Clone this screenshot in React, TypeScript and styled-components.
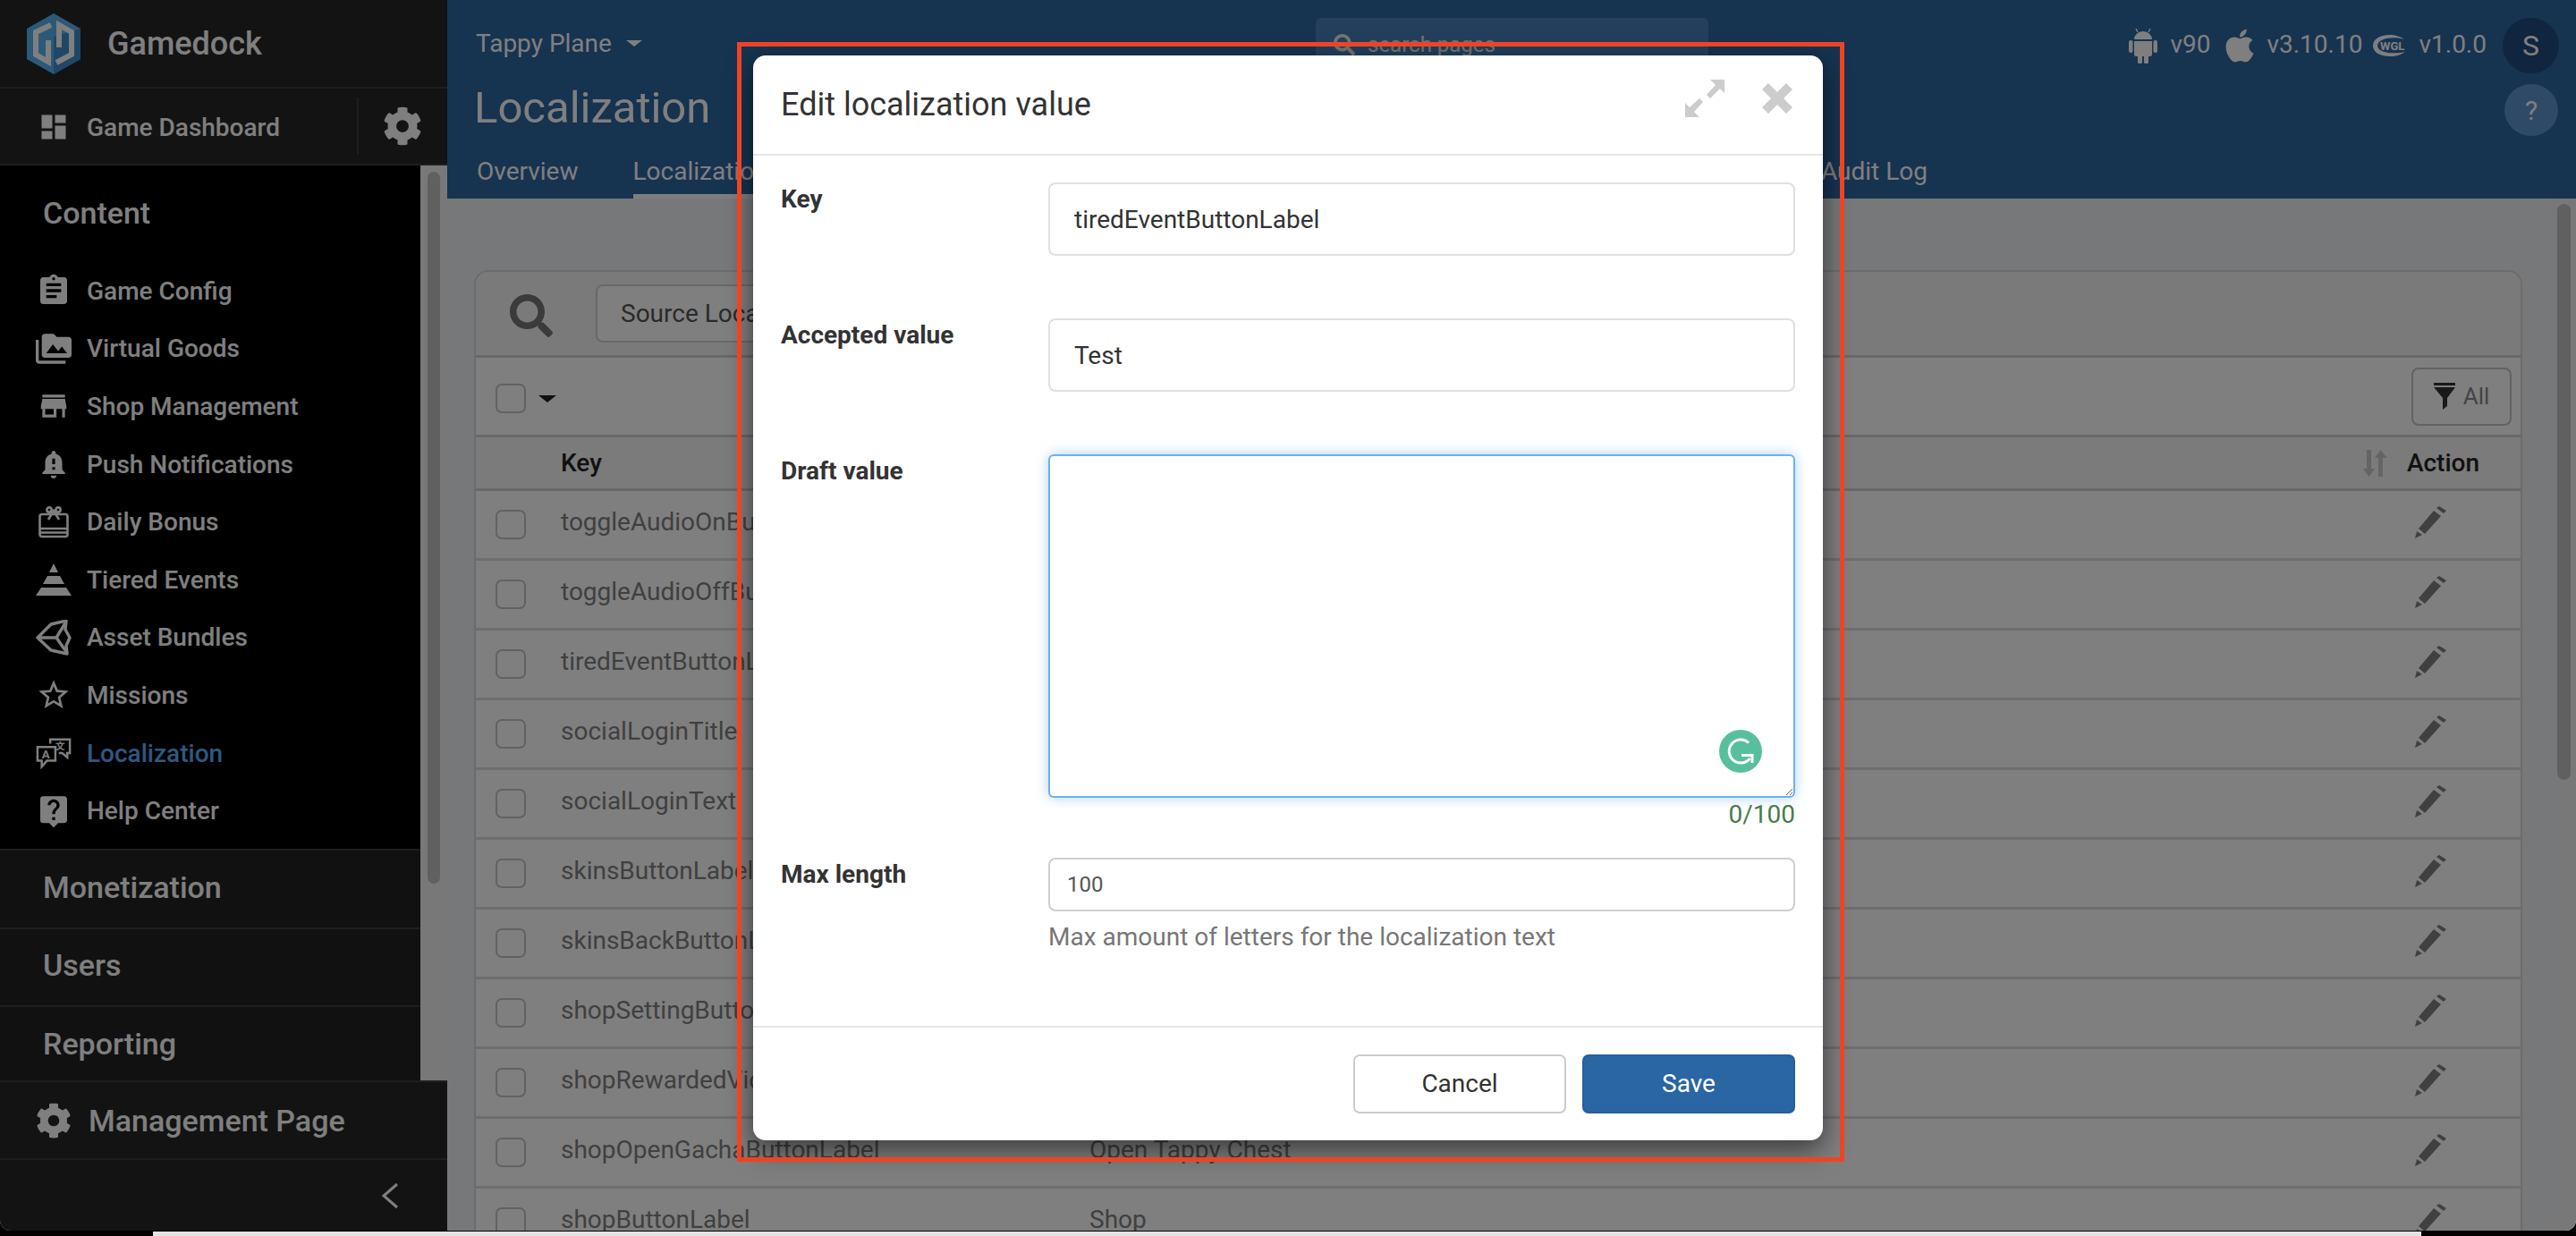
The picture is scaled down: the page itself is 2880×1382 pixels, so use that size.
import React from "react";
import styled, { createGlobalStyle } from "styled-components";
import {
  MdDashboard,
  MdAssignment,
  MdPermMedia,
  MdStore,
  MdNotificationImportant,
  MdLiveHelp,
  MdStarBorder,
} from "react-icons/md";
import { FaCog, FaSearch, FaApple } from "react-icons/fa";

const Global = createGlobalStyle`
  html, body, #root { margin: 0; padding: 0; height: 1382px; background: #000; overflow: hidden; }
  * { box-sizing: border-box; }
  body { font-family: Roboto, "Liberation Sans", sans-serif; }
`;

const Frame = styled.div`
  position: relative;
  width: 2880px;
  height: 1376px;
  display: grid;
  grid-template-columns: 500px 1fr;
  overflow: hidden;
  border-radius: 0 0 12px 12px;
  background: #eef0f3;
`;

const BottomStrip = styled.div`
  width: 2536px;
  height: 5px;
  margin: 1px 0 0 171px;
  background: #e4e4e4;
`;

/* sidebar */
const Sidebar = styled.aside`
  display: flex;
  flex-direction: column;
  height: 1376px;
  background: #262626;
  color: #fff;
`;
const Brand = styled.div`
  height: 99px;
  flex: none;
  display: flex;
  align-items: center;
  padding-left: 30px;
  gap: 30px;
  border-bottom: 2px solid #3c3c3c;
`;
const BrandName = styled.span`
  font-size: 36px;
  font-weight: 500;
`;
const DashboardRow = styled.div`
  height: 86px;
  flex: none;
  display: flex;
  align-items: center;
  border-bottom: 2px solid #3c3c3c;
`;
const DashboardLink = styled.div`
  width: 401px;
  height: 64px;
  display: flex;
  align-items: center;
  padding: 2px 0 0 42px;
  gap: 19px;
  font-size: 28px;
  font-weight: 500;
  border-right: 2px solid #3c3c3c;
`;
const DashboardGear = styled.div`
  flex: 1;
  display: flex;
  justify-content: center;
  padding-right: 2px;
`;
const ScrollArea = styled.div`
  height: 1023px;
  flex: none;
  display: flex;
`;
const NavColumn = styled.div`
  width: 470px;
  display: flex;
  flex-direction: column;
  background: #222;
`;
const ContentSection = styled.div`
  height: 764px;
  padding-top: 30px;
  background: #000;
`;
const SectionTitle = styled.div`
  font-size: 34px;
  font-weight: 500;
  padding-left: 48px;
  height: 46px;
  display: flex;
  align-items: center;
`;
const ItemList = styled.nav`
  margin-top: 32px;
  display: flex;
  flex-direction: column;
`;
const NavItem = styled.div<{ $active?: boolean }>`
  height: 64.6px;
  display: flex;
  align-items: center;
  font-size: 28px;
  font-weight: 500;
  color: ${(p) => (p.$active ? "#5cb0ff" : "#fff")};
`;
const NavIcon = styled.span`
  width: 97px;
  padding: 0 17px 0 40px;
  display: flex;
  flex: none;
  align-items: center;
  justify-content: center;
  color: #fff;
`;
const CollapsedSection = styled.div<{ $h: number; $lift: number }>`
  height: ${(p) => p.$h}px;
  border-top: 2px solid #3c3c3c;
  padding-bottom: ${(p) => p.$lift}px;
  display: flex;
  align-items: center;
`;
const ScrollTrack = styled.div<{ $w: number; $pad: number; $top: number }>`
  width: ${(p) => p.$w}px;
  flex: none;
  background: #f1f1f1;
  padding: ${(p) => p.$top}px ${(p) => p.$pad}px 0 ${(p) => p.$pad}px;
`;
const ScrollThumb = styled.div<{ $h: number }>`
  height: ${(p) => p.$h}px;
  background: #c1c1c1;
  border-radius: 10px;
`;
const ManagementRow = styled.div`
  height: 89px;
  flex: none;
  display: flex;
  align-items: center;
  gap: 19px;
  padding-left: 40px;
  font-size: 34px;
  font-weight: 500;
  border-top: 2px solid #3c3c3c;
  border-bottom: 2px solid #3c3c3c;
`;
const CollapseRow = styled.div`
  flex: 1;
  display: flex;
  align-items: center;
  padding-left: 425px;
`;

/* main */
const Main = styled.main`
  display: flex;
  flex-direction: column;
  min-width: 0;
  height: 1376px;
`;
const Header = styled.header`
  height: 222px;
  flex: none;
  background: #2c66a1;
  color: #fff;
  display: flex;
  flex-direction: column;
`;
const TopBar = styled.div`
  height: 84px;
  display: flex;
  align-items: flex-start;
  padding: 20px 19px 0 32px;
`;
const GameSelect = styled.div`
  width: 939px;
  height: 56px;
  display: flex;
  align-items: center;
  gap: 16px;
  font-size: 28px;
`;
const Caret = styled.span<{ $c: string; $s: number }>`
  width: 0;
  height: 0;
  border-left: ${(p) => p.$s}px solid transparent;
  border-right: ${(p) => p.$s}px solid transparent;
  border-top: ${(p) => Math.round(p.$s * 0.8)}px solid ${(p) => p.$c};
`;
const SearchBox = styled.div`
  width: 439px;
  height: 60px;
  background: #467eb8;
  border-radius: 6px;
  display: flex;
  align-items: center;
  gap: 14px;
  padding-left: 20px;
  font-size: 24px;
  color: #e8e8e8;
`;
const Versions = styled.div`
  margin-left: auto;
  height: 62px;
  display: flex;
  align-items: center;
  font-size: 28px;
`;
const VersionText = styled.span<{ $ml: number }>`
  margin: -3px 0 0 ${(p) => p.$ml}px;
`;
const VersionIcon = styled.span<{ $ml: number }>`
  margin-left: ${(p) => p.$ml}px;
  display: flex;
  align-items: center;
`;
const Avatar = styled.div`
  width: 63px;
  height: 62px;
  margin-left: 18px;
  border-radius: 50%;
  background: #204a7e;
  display: flex;
  align-items: center;
  justify-content: center;
  font-size: 32px;
`;
const TitleRow = styled.div`
  height: 72px;
  display: flex;
  align-items: center;
  justify-content: space-between;
  padding: 0 20px 0 30px;
`;
const PageTitle = styled.h1`
  margin: 0;
  font-size: 49px;
  font-weight: 400;
`;
const HelpBubble = styled.div`
  width: 60px;
  height: 58px;
  margin-top: 6px;
  border-radius: 50%;
  background: #5c94cc;
  display: flex;
  align-items: center;
  justify-content: center;
  font-size: 30px;
`;
const Tabs = styled.div`
  height: 66px;
  display: flex;
  gap: 61px;
  padding: 0 725px 0 33px;
`;
const Tab = styled.div<{ $active?: boolean; $end?: boolean }>`
  padding-top: 14px;
  line-height: 44px;
  font-size: 28px;
  margin-left: ${(p) => (p.$end ? "auto" : "0")};
  border-bottom: 5px solid ${(p) => (p.$active ? "#fff" : "transparent")};
`;
const Body = styled.div`
  flex: 1;
  min-height: 0;
  display: flex;
  overflow: hidden;
`;
const Content = styled.div`
  flex: 1;
  min-width: 0;
  padding: 80px 33px 0 30px;
`;
const Card = styled.section`
  background: #fff;
  border: 2px solid #d8d8d8;
  border-radius: 16px 16px 0 0;
`;
const Toolbar = styled.div`
  height: 96px;
  display: flex;
  align-items: center;
  padding-left: 38px;
  gap: 48px;
  background: #f4f4f4;
  border-bottom: 3px solid #d0d0d0;
  border-radius: 14px 14px 0 0;
`;
const SearchGlyph = styled.span`
  display: flex;
  margin-top: 4px;
  color: #777;
`;
const LocaleSelect = styled.div`
  width: 420px;
  height: 65px;
  border: 2px solid #d0d0d0;
  border-radius: 8px;
  background: #fff;
  display: flex;
  align-items: center;
  padding-left: 26px;
  font-size: 28px;
  color: #555;
`;
const FilterRow = styled.div`
  height: 89px;
  display: flex;
  align-items: center;
  padding: 5px 10px 0 22px;
  gap: 14px;
  background: #fff;
  border-bottom: 3px solid #d0d0d0;
`;
const Check = styled.span`
  display: block;
  flex: none;
  width: 34px;
  height: 33px;
  background: #fff;
  border: 2px solid #c4c4c4;
  border-radius: 7px;
`;
const FilterButton = styled.div`
  margin: -5px 0 0 auto;
  width: 112px;
  height: 65px;
  border: 2px solid #c4c4c4;
  border-radius: 8px;
  display: flex;
  align-items: center;
  justify-content: center;
  gap: 9px;
  font-size: 26px;
  color: #888;
`;
const HeadRow = styled.div`
  height: 60px;
  display: flex;
  align-items: center;
  padding: 0 46px 0 95px;
  background: #f6f6f6;
  border-bottom: 3px solid #d0d0d0;
  font-size: 28px;
  font-weight: 500;
  color: #222;
`;
const HeadAction = styled.span`
  margin-left: auto;
  display: flex;
  align-items: center;
  gap: 22px;
`;
const Row = styled.div`
  height: 78px;
  display: flex;
  align-items: center;
  padding-left: 22px;
  background: #fff;
  border-bottom: 3px solid #dcdcdc;
  font-size: 28px;
  color: #808080;
`;
const KeyCell = styled.span`
  width: 591px;
  margin-left: 39px;
  margin-top: -6px;
`;
const ValueCell = styled.span`
  flex: 1;
  margin-top: -6px;
`;
const EditCell = styled.span`
  width: 150px;
  display: flex;
  padding-left: 32px;
  margin-top: -6px;
`;

/* modal */
const Overlay = styled.div`
  position: absolute;
  inset: 0;
  background: rgba(0, 0, 0, 0.5);
  display: flex;
  justify-content: center;
  align-items: flex-start;
  padding-top: 62px;
`;
const Modal = styled.div`
  position: relative;
  width: 1196px;
  background: #fff;
  border-radius: 14px;
  box-shadow: 0 10px 30px rgba(0, 0, 0, 0.55);
  color: #333;
`;
const Annotation = styled.div`
  position: absolute;
  inset: -15px -24px -24px -18px;
  border: 5px solid #ee4423;
  pointer-events: none;
`;
const ModalHeader = styled.div`
  height: 112px;
  display: flex;
  align-items: center;
  justify-content: space-between;
  padding: 0 34px 0 31px;
  border-bottom: 2px solid #e6e6e6;
`;
const ModalTitle = styled.h2`
  margin: 0;
  font-size: 36px;
  font-weight: 400;
  color: #333;
`;
const HeaderActions = styled.div`
  display: flex;
  align-items: center;
  gap: 42px;
  margin-top: -14px;
`;
const FormBody = styled.div`
  padding: 30px 31px 0;
  height: 975px;
  border-bottom: 2px solid #e6e6e6;
  display: flex;
  flex-direction: column;
`;
const FormRow = styled.div<{ $mb: number }>`
  display: grid;
  grid-template-columns: 299px 1fr;
  margin-bottom: ${(p) => p.$mb}px;
`;
const Label = styled.label`
  font-size: 28px;
  font-weight: 700;
  line-height: 38px;
  color: #333;
`;
const TextInput = styled.input`
  display: block;
  width: 100%;
  height: 82px;
  padding: 0 27px;
  border: 2px solid #e0e0e0;
  border-radius: 8px;
  font: 400 28px Roboto, sans-serif;
  color: #333;
  background: #fff;
  outline: none;
`;
const SmallInput = styled(TextInput)`
  height: 60px;
  padding: 0 19px;
  border-color: #cfcfcf;
  font-size: 24px;
  color: #555;
`;
const AreaWrap = styled.div`
  position: relative;
`;
const TextArea = styled.textarea`
  display: block;
  width: 100%;
  height: 384px;
  border: 2px solid #6fb0e8;
  border-radius: 6px;
  box-shadow: 0 0 14px rgba(102, 175, 233, 0.55);
  outline: none;
  resize: vertical;
  background: #fff;
`;
const GrammarlyBadge = styled.span`
  position: absolute;
  right: 37px;
  bottom: 28px;
  display: flex;
`;
const Counter = styled.div`
  text-align: right;
  font-size: 28px;
  line-height: 36px;
  margin-top: 1px;
  color: #4b7a4b;
`;
const Hint = styled.div`
  font-size: 28px;
  line-height: 36px;
  margin-top: 11px;
  color: #777;
`;
const Footer = styled.div`
  display: flex;
  justify-content: flex-end;
  gap: 18px;
  padding: 30px 31px;
`;
const Button = styled.button<{ $primary?: boolean }>`
  width: 238px;
  height: 66px;
  padding-bottom: 2px;
  border-radius: 7px;
  border: 2px solid ${(p) => (p.$primary ? "#285f99" : "#ccc")};
  background: ${(p) => (p.$primary ? "#2a66a4" : "#fff")};
  color: ${(p) => (p.$primary ? "#fff" : "#333")};
  font: 400 28px Roboto, sans-serif;
`;

const Logo = () => (
  <svg width="60" height="68" viewBox="0 0 60 68">
    <polygon points="30,0 60,17 60,51 30,68 0,51 0,17" fill="#56b4f0" />
    <polygon points="30,26 60,17 60,51 30,68" fill="#3f8fd0" />
    <path d="M27 13 L10 21 V46 L24 54 V30" fill="none" stroke="#fff" strokeWidth="6" />
    <path d="M33 55 L50 46 V21 L36 13 V38" fill="none" stroke="#fff" strokeWidth="6" />
  </svg>
);
const GiftIcon = () => (
  <svg width="34" height="36" viewBox="0 0 34 36" fill="none" stroke="#fff" strokeWidth="2.6">
    <rect x="1.5" y="9" width="31" height="25" rx="2.5" />
    <path d="M1.5 25h31M1.5 29.5h31" />
    <path d="M11 9 17 4.5 23 9M17 5 11 15M17 5 23 15" />
    <circle cx="12" cy="4" r="2.6" />
    <circle cx="22" cy="4" r="2.6" />
  </svg>
);
const PyramidIcon = () => (
  <svg width="40" height="36" viewBox="0 0 40 36" fill="#fff">
    <polygon points="20,0 25,10 15,10" />
    <polygon points="13,14 27,14 32,23 8,23" />
    <polygon points="6,27 34,27 40,36 0,36" />
  </svg>
);
const UnityIcon = () => (
  <svg width="40" height="40" viewBox="0 0 40 40" fill="none" stroke="#fff" strokeWidth="3.4" strokeLinejoin="round">
    <path d="M2 20 L17 5 L34 1 L33 11 L38 20 L34 29 L35 38 L17 34 Z" />
    <path d="M2 20 H23 L34 2 M23 20 L35 37" />
  </svg>
);
const TranslateIcon = () => (
  <svg width="42" height="36" viewBox="0 0 42 36" fill="none" stroke="#fff" strokeWidth="2.6">
    <path d="M2 11h21v16H13l-6 7v-7H2z" />
    <path d="M17 7V2h23v16h-3v5l-6-5h-4" />
    <text x="7" y="24" fontFamily="Roboto" fontSize="14" fontWeight="700" fill="#fff" stroke="none">A</text>
    <text x="23" y="14" fontFamily="'Noto Sans CJK SC'" fontSize="11" fontWeight="700" fill="#fff" stroke="none">文</text>
  </svg>
);
const ChevronIcon = () => (
  <svg width="22" height="30" viewBox="0 0 22 30" fill="none" stroke="#fff" strokeWidth="3">
    <path d="M19 2 4 15l15 13" />
  </svg>
);
const ExpandIcon = () => (
  <svg width="44" height="42" viewBox="0 0 44 42" fill="#ccc">
    <polygon points="44,0 44,15 39,10 28,21 24,17 34,6 28,0" />
    <polygon points="0,42 0,26 5,31 16,21 20,25 10,36 16,42" />
  </svg>
);
const CloseIcon = () => (
  <svg width="34" height="34" viewBox="0 0 34 34" fill="#ccc">
    <polygon points="7,0 17,10 27,0 34,7 24,17 34,27 27,34 17,24 7,34 0,27 10,17 0,7" />
  </svg>
);
const FunnelIcon = () => (
  <svg width="24" height="30" viewBox="0 0 24 30" fill="#333">
    <rect x="0" y="0" width="24" height="3" />
    <polygon points="0,5 24,5 15,17 15,26 10,30 10,17" />
  </svg>
);
const SortIcon = () => (
  <svg width="28" height="30" viewBox="0 0 28 30" fill="#c8c8c8">
    <polygon points="5,0 10,0 10,21 14,21 7.5,30 1,21 5,21" />
    <polygon points="18,30 23,30 23,9 28,9 20.5,0 14,9 18,9" />
  </svg>
);
const PencilIcon = () => (
  <svg width="37" height="36" viewBox="0 0 37 36" fill="#808080">
    <polygon points="0,36 2,28 8,32" />
    <polygon points="4,25 21,5 29,11 11,31" />
    <polygon points="24,2 27,0 35,5 32,8" />
  </svg>
);
const GrammarlyIcon = () => (
  <svg width="48" height="48" viewBox="0 0 48 48">
    <circle cx="24" cy="24" r="24" fill="#58bf9e" />
    <path d="M33 14.5A13 13 0 1 0 34.5 32" fill="none" stroke="#fff" strokeWidth="3" />
    <path d="M25 28.5H37V37" fill="none" stroke="#fff" strokeWidth="3" />
  </svg>
);
const WglIcon = () => (
  <svg width="40" height="26" viewBox="0 0 40 26">
    <path d="M20 1C8 1 1 6 1 13s7 12 19 12c7 0 13-2 17-5-9 2-30 3-31-7C6 5 24 2 36 6c-4-3-10-5-16-5z" fill="#fff" />
    <text x="9" y="18" fontFamily="Roboto" fontSize="13" fontWeight="700" fill="#fff">WGL</text>
  </svg>
);
const AndroidIcon = () => (
  <svg width="32" height="40" viewBox="0 0 32 40" fill="#fff">
    <path d="M6 13a10 9 0 0 1 20 0z" />
    <path d="M10 5 8 1M22 5l2-4" stroke="#fff" strokeWidth="1.4" />
    <path d="M6 15h20v15a2 2 0 0 1-2 2h-2v6a2.5 2.5 0 0 1-5 0v-6h-2v6a2.5 2.5 0 0 1-5 0v-6H8a2 2 0 0 1-2-2z" />
    <rect x="0" y="14" width="4.5" height="14" rx="2.2" />
    <rect x="27.5" y="14" width="4.5" height="14" rx="2.2" />
  </svg>
);

const items = [
  { label: "Game Config", icon: <MdAssignment size={40} /> },
  { label: "Virtual Goods", icon: <MdPermMedia size={44} /> },
  { label: "Shop Management", icon: <MdStore size={38} /> },
  { label: "Push Notifications", icon: <MdNotificationImportant size={38} /> },
  { label: "Daily Bonus", icon: <GiftIcon /> },
  { label: "Tiered Events", icon: <PyramidIcon /> },
  { label: "Asset Bundles", icon: <UnityIcon /> },
  { label: "Missions", icon: <MdStarBorder size={40} /> },
  { label: "Localization", icon: <TranslateIcon />, active: true },
  { label: "Help Center", icon: <MdLiveHelp size={42} /> },
];

const rows = [
  { k: "toggleAudioOnButtonLabel", v: "" },
  { k: "toggleAudioOffButtonLabel", v: "" },
  { k: "tiredEventButtonLabel", v: "" },
  { k: "socialLoginTitle", v: "" },
  { k: "socialLoginText", v: "" },
  { k: "skinsButtonLabel", v: "" },
  { k: "skinsBackButtonLabel", v: "" },
  { k: "shopSettingButtonLabel", v: "" },
  { k: "shopRewardedVideoButtonLabel", v: "" },
  { k: "shopOpenGachaButtonLabel", v: "Open Tappy Chest" },
  { k: "shopButtonLabel", v: "Shop" },
];

export default function App() {
  return (
    <>
      <Global />
      <Frame>
        <Sidebar>
          <Brand>
            <Logo />
            <BrandName>Gamedock</BrandName>
          </Brand>
          <DashboardRow>
            <DashboardLink>
              <MdDashboard size={36} />
              Game Dashboard
            </DashboardLink>
            <DashboardGear>
              <FaCog size={44} />
            </DashboardGear>
          </DashboardRow>
          <ScrollArea>
            <NavColumn>
              <ContentSection>
                <SectionTitle>Content</SectionTitle>
                <ItemList>
                  {items.map((it) => (
                    <NavItem key={it.label} $active={it.active}>
                      <NavIcon>{it.icon}</NavIcon>
                      {it.label}
                    </NavItem>
                  ))}
                </ItemList>
              </ContentSection>
              <CollapsedSection $h={88} $lift={5}>
                <SectionTitle>Monetization</SectionTitle>
              </CollapsedSection>
              <CollapsedSection $h={87} $lift={5}>
                <SectionTitle>Users</SectionTitle>
              </CollapsedSection>
              <CollapsedSection $h={84} $lift={0}>
                <SectionTitle>Reporting</SectionTitle>
              </CollapsedSection>
            </NavColumn>
            <ScrollTrack $w={30} $pad={8} $top={7}>
              <ScrollThumb $h={796} />
            </ScrollTrack>
          </ScrollArea>
          <ManagementRow>
            <FaCog size={40} />
            Management Page
          </ManagementRow>
          <CollapseRow>
            <ChevronIcon />
          </CollapseRow>
        </Sidebar>
        <Main>
          <Header>
            <TopBar>
              <GameSelect>
                Tappy Plane
                <Caret $c="#fff" $s={9} />
              </GameSelect>
              <SearchBox>
                <FaSearch size={24} />
                search pages
              </SearchBox>
              <Versions>
                <VersionIcon $ml={0}>
                  <AndroidIcon />
                </VersionIcon>
                <VersionText $ml={14}>v90</VersionText>
                <VersionIcon $ml={12}>
                  <FaApple size={42} />
                </VersionIcon>
                <VersionText $ml={9}>v3.10.10</VersionText>
                <VersionIcon $ml={11}>
                  <WglIcon />
                </VersionIcon>
                <VersionText $ml={12}>v1.0.0</VersionText>
                <Avatar>S</Avatar>
              </Versions>
            </TopBar>
            <TitleRow>
              <PageTitle>Localization</PageTitle>
              <HelpBubble>?</HelpBubble>
            </TitleRow>
            <Tabs>
              <Tab>Overview</Tab>
              <Tab $active>Localization</Tab>
              <Tab $end>Audit Log</Tab>
            </Tabs>
          </Header>
          <Body>
            <Content>
              <Card>
                <Toolbar>
                  <SearchGlyph>
                    <FaSearch size={48} />
                  </SearchGlyph>
                  <LocaleSelect>Source Locale</LocaleSelect>
                </Toolbar>
                <FilterRow>
                  <Check />
                  <Caret $c="#222" $s={10} />
                  <FilterButton>
                    <FunnelIcon />
                    All
                  </FilterButton>
                </FilterRow>
                <HeadRow>
                  Key
                  <HeadAction>
                    <SortIcon />
                    Action
                  </HeadAction>
                </HeadRow>
                {rows.map((r) => (
                  <Row key={r.k}>
                    <Check />
                    <KeyCell>{r.k}</KeyCell>
                    <ValueCell>{r.v}</ValueCell>
                    <EditCell>
                      <PencilIcon />
                    </EditCell>
                  </Row>
                ))}
              </Card>
            </Content>
            <ScrollTrack $w={27} $pad={6} $top={6}>
              <ScrollThumb $h={644} />
            </ScrollTrack>
          </Body>
        </Main>
        <Overlay>
          <Modal>
            <ModalHeader>
              <ModalTitle>Edit localization value</ModalTitle>
              <HeaderActions>
                <ExpandIcon />
                <CloseIcon />
              </HeaderActions>
            </ModalHeader>
            <FormBody>
              <FormRow $mb={70}>
                <Label>Key</Label>
                <TextInput readOnly value="tiredEventButtonLabel" />
              </FormRow>
              <FormRow $mb={70}>
                <Label>Accepted value</Label>
                <TextInput readOnly value="Test" />
              </FormRow>
              <FormRow $mb={30}>
                <Label>Draft value</Label>
                <div>
                  <AreaWrap>
                    <TextArea readOnly />
                    <GrammarlyBadge>
                      <GrammarlyIcon />
                    </GrammarlyBadge>
                  </AreaWrap>
                  <Counter>0/100</Counter>
                </div>
              </FormRow>
              <FormRow $mb={0}>
                <Label>Max length</Label>
                <div>
                  <SmallInput readOnly value="100" />
                  <Hint>Max amount of letters for the localization text</Hint>
                </div>
              </FormRow>
            </FormBody>
            <Footer>
              <Button>Cancel</Button>
              <Button $primary>Save</Button>
            </Footer>
            <Annotation />
          </Modal>
        </Overlay>
      </Frame>
      <BottomStrip />
    </>
  );
}
